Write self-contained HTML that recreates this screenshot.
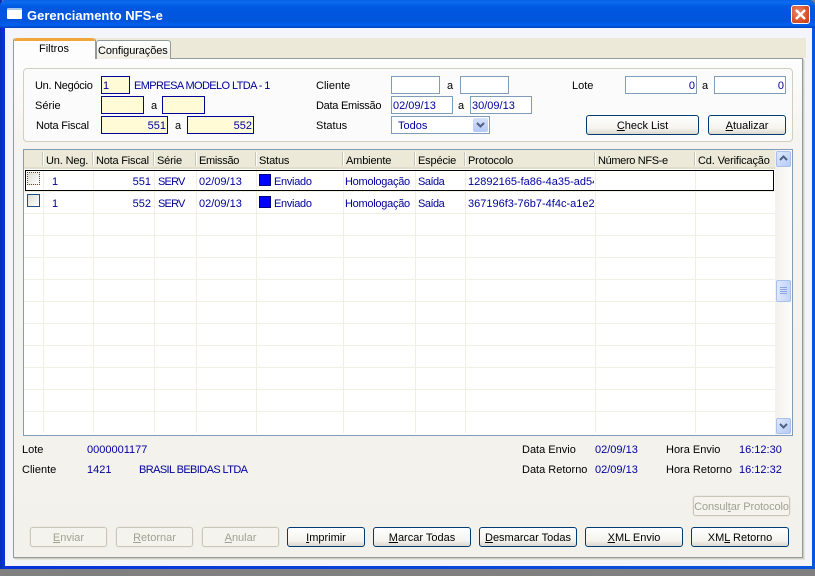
<!DOCTYPE html>
<html><head><meta charset="utf-8"><style>
html,body{margin:0;padding:0;width:815px;height:576px;overflow:hidden;background:#808080}
*{box-sizing:border-box}
body{font-family:"Liberation Sans",sans-serif;font-size:11px;color:#000;position:relative}
div,span.a{position:absolute}
.t{white-space:nowrap;line-height:13px;height:13px;margin-top:1px}
.b{color:#00009c}
.i{height:18px;border:1px solid #7f9db9;background:#fff;color:#00009c;line-height:18px;padding:0 1px;white-space:nowrap}
.y{background:#fffbd6;border-color:#00009c}
.r{text-align:right}
.btn{height:20px;border:1px solid #003c74;border-radius:3px;background:linear-gradient(#fff,#f4f3ee 70%,#dcd8ce);text-align:center;line-height:20px;white-space:nowrap}
.dis{border-color:#c9c7ba;color:#a1a192;background:#f4f3ee;box-shadow:0 0 0 1px #ecebe3}
.v{width:1px;top:169px;height:264px;background:#f1efe2}
.h{left:24px;width:751px;height:1px;background:#f1efe2}
.hs{width:2px;top:152px;height:14px;background:linear-gradient(90deg,#cbc7b8 50%,#fff 50%)}
.ht{top:154px;letter-spacing:-.15px}
.u{letter-spacing:-.6px}
.l{letter-spacing:-.27px}
</style></head><body>
<!-- window frame -->
<div style="left:0;top:0;width:815px;height:569px;background:linear-gradient(90deg,#0831d9 0,#0855dd 100%);border-radius:6px 6px 0 0"></div>
<div style="left:0;top:0;width:2px;height:569px;background:#0a2fb5"></div>
<div style="left:0;top:0;width:815px;height:28px;border-radius:6px 6px 0 0;background:linear-gradient(#0a5fe6 0,#0a6cf0 8%,#0058e0 25%,#0055db 75%,#0060ee 90%,#0040c0 100%)"></div>
<div style="left:5px;top:28px;width:807px;height:538px;background:#f3f5fb"></div>
<!-- title -->
<div style="left:7px;top:8px;width:15px;height:11px;background:#fff;border-top:2px solid #a9c6ee;border-radius:1px"></div>
<div class="t" style="left:27px;top:7px;color:#fff;font-weight:bold;font-size:13px;line-height:15px;height:15px">Gerenciamento NFS-e</div>
<div style="left:791px;top:5px;width:19px;height:19px;border:1px solid #fff;border-radius:3px;background:radial-gradient(circle at 35% 35%,#e98a6a,#d9502a 60%,#c0401c)">
<svg width="17" height="17" viewBox="0 0 17 17" style="display:block"><path d="M4 4L13 13M13 4L4 13" stroke="#fff" stroke-width="2.4" fill="none"/></svg></div>
<!-- tab strip -->
<div style="left:13px;top:38px;width:793px;height:20px;background:#ece9d8"></div>
<!-- panel -->
<div style="left:13px;top:58px;width:790px;height:500px;border:1px solid #919b9c;border-left-color:#919b9c;background:linear-gradient(#fdfdfe 0,#f5f4f0 16%,#f3f1ec 100%);box-shadow:1px 1px 0 #d0cec4,2px 2px 0 #e4e3dc"></div>
<!-- tabs -->
<div style="left:13px;top:38px;width:83px;height:21px;background:#fdfdfd;border:1px solid #919b9c;border-bottom:none;border-top:none;border-radius:3px 3px 0 0"></div>
<div style="left:14px;top:38px;width:81px;height:3px;background:#f0a63a;border-radius:3px 3px 0 0"></div>
<div class="t" style="left:39px;top:42px">Filtros</div>
<div style="left:96px;top:40px;width:75px;height:19px;background:linear-gradient(#fff,#f0eee4);border:1px solid #919b9c;border-bottom:none;border-radius:3px 3px 0 0"></div>
<div class="t" style="left:98px;top:44px;letter-spacing:-.1px">Configurações</div>
<!-- group box -->
<div style="left:23px;top:68px;width:770px;height:74px;border:1px solid #d0d0bf;border-radius:4px;background:#fbfbfb"></div>
<div class="t l" style="left:35px;top:79px">Un. Negócio</div>
<div class="i y" style="left:101px;top:76px;width:29px">1</div>
<div class="t b u" style="left:134px;top:79px">EMPRESA MODELO LTDA - 1</div>
<div class="t" style="left:35px;top:99px">Série</div>
<div class="i y" style="left:101px;top:96px;width:43px"></div>
<div class="t" style="left:151px;top:99px">a</div>
<div class="i y" style="left:162px;top:96px;width:43px"></div>
<div class="t" style="left:36px;top:119px;letter-spacing:-.2px">Nota Fiscal</div>
<div class="i y r" style="left:101px;top:116px;width:67px">551</div>
<div class="t" style="left:175px;top:119px">a</div>
<div class="i y r" style="left:187px;top:116px;width:67px">552</div>
<div class="t" style="left:316px;top:79px">Cliente</div>
<div class="i" style="left:391px;top:76px;width:49px"></div>
<div class="t" style="left:447px;top:79px">a</div>
<div class="i" style="left:460px;top:76px;width:49px"></div>
<div class="t l" style="left:316px;top:99px">Data Emissão</div>
<div class="i" style="left:391px;top:96px;width:62px">02/09/13</div>
<div class="t" style="left:458px;top:99px">a</div>
<div class="i" style="left:470px;top:96px;width:62px">30/09/13</div>
<div class="t" style="left:316px;top:119px">Status</div>
<div class="i" style="left:391px;top:116px;width:99px;padding-left:6px;line-height:19px">Todos</div>
<div style="left:473px;top:118px;width:15px;height:14px;background:linear-gradient(#d5e0fb,#b4c8f6);border-radius:2px">
<svg width="15" height="14" viewBox="0 0 15 14" style="display:block"><path d="M4 5L7.5 8.5L11 5" stroke="#4d6185" stroke-width="2" fill="none"/></svg></div>
<div class="t" style="left:572px;top:79px">Lote</div>
<div class="i r" style="left:625px;top:76px;width:72px">0</div>
<div class="t" style="left:702px;top:79px">a</div>
<div class="i r" style="left:714px;top:76px;width:72px">0</div>
<div class="btn" style="left:586px;top:115px;width:113px"><u>C</u>heck List</div>
<div class="btn" style="left:708px;top:115px;width:78px"><u>A</u>tualizar</div>
<!-- grid -->
<div style="left:23px;top:149px;width:770px;height:287px;border:1px solid #7f9db9;background:#fff"></div>
<div style="left:24px;top:150px;width:751px;height:19px;background:#ece9d8;border-bottom:2px solid #e2decd"></div>
<div class="hs" style="left:42px"></div><div class="hs" style="left:92px"></div><div class="hs" style="left:153px"></div><div class="hs" style="left:195px"></div><div class="hs" style="left:255px"></div><div class="hs" style="left:342px"></div><div class="hs" style="left:414px"></div><div class="hs" style="left:464px"></div><div class="hs" style="left:594px"></div><div class="hs" style="left:694px"></div>
<div class="t ht" style="left:46px">Un. Neg.</div>
<div class="t ht" style="left:96px;letter-spacing:-.2px">Nota Fiscal</div>
<div class="t ht" style="left:157px">Série</div>
<div class="t ht" style="left:199px;letter-spacing:-.3px">Emissão</div>
<div class="t ht" style="left:259px">Status</div>
<div class="t ht" style="left:346px">Ambiente</div>
<div class="t ht" style="left:418px">Espécie</div>
<div class="t ht" style="left:468px">Protocolo</div>
<div class="t ht" style="left:598px;letter-spacing:-.35px">Número NFS-e</div>
<div class="t ht" style="left:698px;width:74px;overflow:hidden">Cd. Verificação</div>
<div class="v" style="left:43px"></div><div class="v" style="left:93px"></div><div class="v" style="left:154px"></div><div class="v" style="left:196px"></div><div class="v" style="left:256px"></div><div class="v" style="left:343px"></div><div class="v" style="left:415px"></div><div class="v" style="left:465px"></div><div class="v" style="left:595px"></div><div class="v" style="left:695px"></div>
<div class="h" style="top:191px"></div><div class="h" style="top:213px"></div><div class="h" style="top:235px"></div><div class="h" style="top:257px"></div><div class="h" style="top:279px"></div><div class="h" style="top:301px"></div><div class="h" style="top:323px"></div><div class="h" style="top:345px"></div><div class="h" style="top:367px"></div><div class="h" style="top:389px"></div><div class="h" style="top:411px"></div>
<div style="left:25px;top:170px;width:749px;height:21px;border:1px solid #000;border-width:1px"></div>
<!-- row 1 -->
<div style="left:27px;top:172px;width:13px;height:13px;border:1px dotted #6b4a2a;background:linear-gradient(135deg,#dcdcd7,#fff)"></div>
<div class="t b" style="left:52px;top:175px">1</div>
<div class="t b r" style="left:100px;top:175px;width:51px">551</div>
<div class="t b" style="left:158px;top:175px;letter-spacing:-.8px">SERV</div>
<div class="t b" style="left:199px;top:175px">02/09/13</div>
<div style="left:259px;top:174px;width:12px;height:12px;background:#0000ff;border:1px solid #000080"></div>
<div class="t b" style="left:274px;top:175px;letter-spacing:-.3px">Enviado</div>
<div class="t b l" style="left:345px;top:175px">Homologação</div>
<div class="t b" style="left:418px;top:175px;letter-spacing:-.5px">Saída</div>
<div class="t b" style="left:468px;top:175px;width:126px;overflow:hidden">12892165-fa86-4a35-ad54</div>
<!-- row 2 -->
<div style="left:27px;top:194px;width:13px;height:13px;border:1px solid #1c5180;background:linear-gradient(135deg,#dcdcd7,#fff)"></div>
<div class="t b" style="left:52px;top:197px">1</div>
<div class="t b r" style="left:100px;top:197px;width:51px">552</div>
<div class="t b" style="left:158px;top:197px;letter-spacing:-.8px">SERV</div>
<div class="t b" style="left:199px;top:197px">02/09/13</div>
<div style="left:259px;top:196px;width:12px;height:12px;background:#0000ff;border:1px solid #000080"></div>
<div class="t b" style="left:274px;top:197px;letter-spacing:-.3px">Enviado</div>
<div class="t b l" style="left:345px;top:197px">Homologação</div>
<div class="t b" style="left:418px;top:197px;letter-spacing:-.5px">Saída</div>
<div class="t b" style="left:468px;top:197px;width:126px;overflow:hidden">367196f3-76b7-4f4c-a1e2</div>
<!-- scrollbar -->
<div style="left:775px;top:150px;width:17px;height:285px;background:linear-gradient(90deg,#f3f1ec,#fdfdfa)"></div>
<div style="left:776px;top:151px;width:15px;height:16px;background:linear-gradient(135deg,#dfe8fd,#b6caf8);border:1px solid #a9bfee;border-radius:2px">
<svg width="13" height="14" viewBox="0 0 13 14" style="display:block"><path d="M3 8L6.5 4.500L10 8" stroke="#4d6185" stroke-width="2" fill="none"/></svg></div>
<div style="left:776px;top:280px;width:15px;height:22px;background:linear-gradient(90deg,#dfe8fd,#c3d3fb);border:1px solid #a9bfee;border-radius:2px">
<svg width="13" height="20" viewBox="0 0 13 20" style="display:block"><path d="M3 6.500H10M3 8.500H10M3 10.500H10M3 12.500H10" stroke="#8aa4e0" stroke-width="1" fill="none"/></svg></div>
<div style="left:776px;top:418px;width:15px;height:16px;background:linear-gradient(135deg,#dfe8fd,#b6caf8);border:1px solid #a9bfee;border-radius:2px">
<svg width="13" height="14" viewBox="0 0 13 14" style="display:block"><path d="M3 5L6.500 8.500L10 5" stroke="#4d6185" stroke-width="2" fill="none"/></svg></div>
<!-- info -->
<div class="t" style="left:22px;top:443px">Lote</div>
<div class="t b" style="left:87px;top:443px">0000001177</div>
<div class="t" style="left:22px;top:463px">Cliente</div>
<div class="t b" style="left:87px;top:463px">1421</div>
<div class="t b u" style="left:139px;top:463px">BRASIL BEBIDAS LTDA</div>
<div class="t" style="left:522px;top:443px">Data Envio</div>
<div class="t b" style="left:595px;top:443px">02/09/13</div>
<div class="t" style="left:666px;top:443px">Hora Envio</div>
<div class="t b" style="left:739px;top:443px">16:12:30</div>
<div class="t" style="left:522px;top:463px">Data Retorno</div>
<div class="t b" style="left:595px;top:463px">02/09/13</div>
<div class="t" style="left:666px;top:463px">Hora Retorno</div>
<div class="t b" style="left:739px;top:463px">16:12:32</div>
<!-- buttons -->
<div class="btn dis" style="left:693px;top:496px;width:97px;letter-spacing:-.1px">Consul<u>t</u>ar Protocolo</div>
<div class="btn dis" style="left:30px;top:527px;width:77px"><u>E</u>nviar</div>
<div class="btn dis" style="left:116px;top:527px;width:77px"><u>R</u>etornar</div>
<div class="btn dis" style="left:202px;top:527px;width:77px"><u>A</u>nular</div>
<div class="btn" style="left:287px;top:527px;width:78px"><u>I</u>mprimir</div>
<div class="btn" style="left:373px;top:527px;width:98px"><u>M</u>arcar Todas</div>
<div class="btn" style="left:479px;top:527px;width:98px"><u>D</u>esmarcar Todas</div>
<div class="btn" style="left:585px;top:527px;width:98px"><u>X</u>ML Envio</div>
<div class="btn" style="left:691px;top:527px;width:98px">XM<u>L</u> Retorno</div>
</body></html>
